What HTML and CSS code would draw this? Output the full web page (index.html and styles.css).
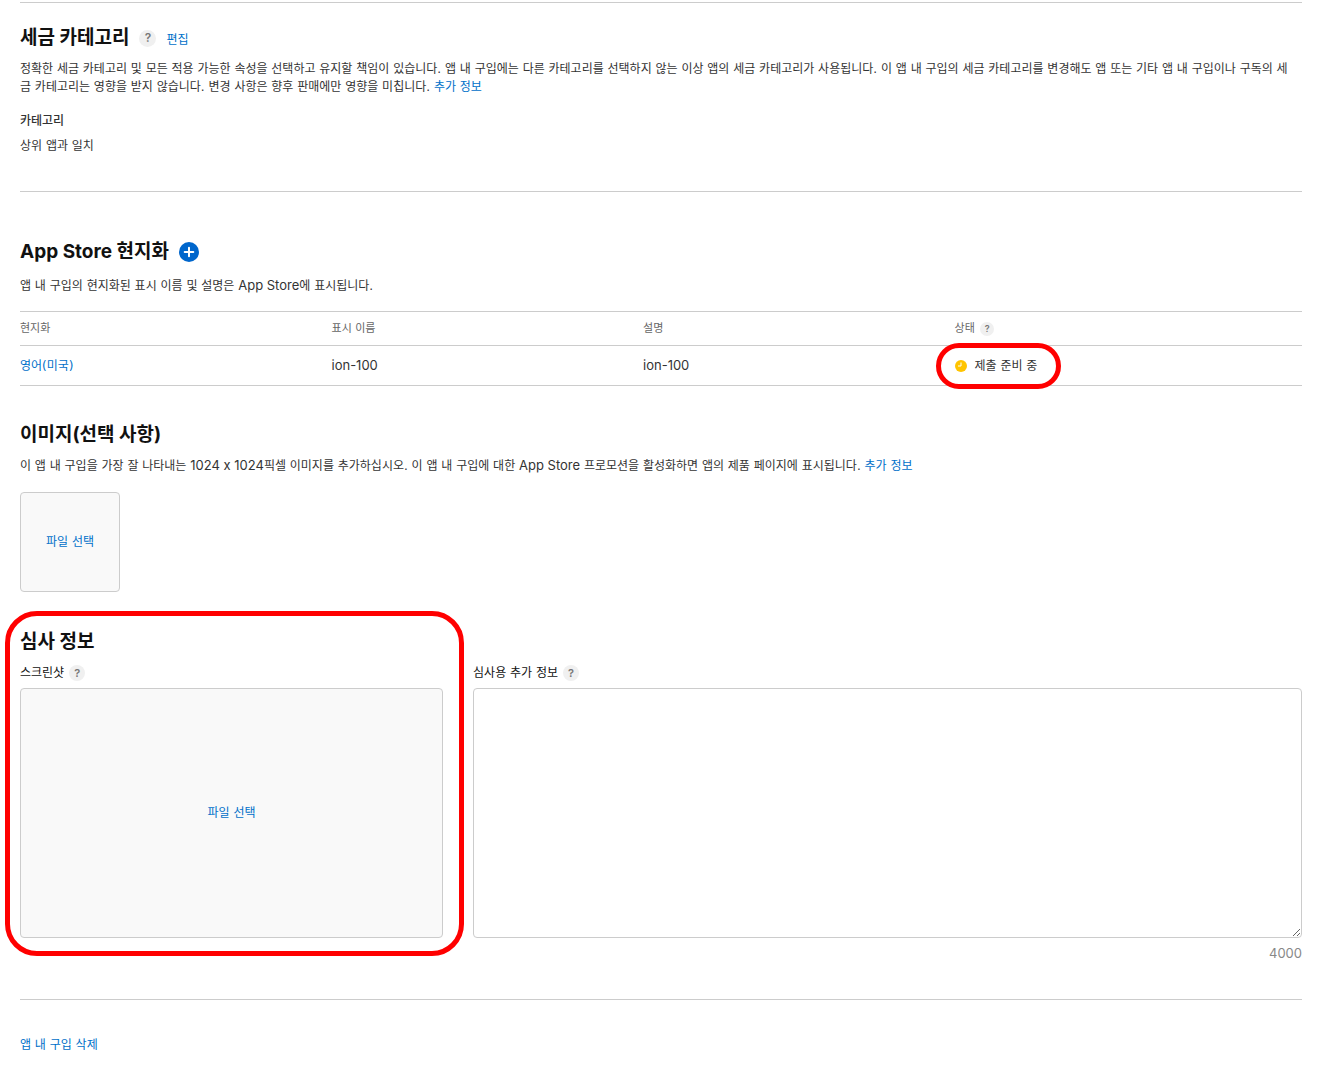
FILE: index.html
```
<!DOCTYPE html>
<html lang="ko">
<head>
    <meta charset="UTF-8">
    <meta name="viewport" content="width=device-width, initial-scale=1.0">
    <title>앱 내 구입</title>
    <link rel="stylesheet" href="styles.css">
</head>
<body>
    <main class="page">
        <section class="tax">
            <div class="heading heading-text">
                <h2>세금 카테고리</h2>
                <button type="button" class="help help-large">?</button>
                <a href="#" class="edit">편집</a>
            </div>
            <p>정확한 세금 카테고리 및 모든 적용 가능한 속성을 선택하고 유지할 책임이 있습니다. 앱 내 구입에는 다른 카테고리를 선택하지 않는 이상 앱의 세금 카테고리가 사용됩니다. 이 앱 내 구입의 세금 카테고리를 변경해도 앱 또는 기타 앱 내 구입이나 구독의 세금 카테고리는 영향을 받지 않습니다. 변경 사항은 향후 판매에만 영향을 미칩니다. <a href="#">추가 정보</a></p>
            <h3>카테고리</h3>
            <p class="value">상위 앱과 일치</p>
        </section>

        <section class="localization">
            <div class="heading">
                <h2>App Store 현지화</h2>
                <button type="button" class="add" aria-label="추가">
                    <svg width="20" height="20" viewBox="0 0 20 20">
                        <circle cx="10" cy="10" r="10" fill="#0066cc"/>
                        <path d="M10 5.7v8.6M5.7 10h8.6" stroke="#fff" stroke-width="2" stroke-linecap="round"/>
                    </svg>
                </button>
            </div>
            <p>앱 내 구입의 현지화된 표시 이름 및 설명은 <span class="latin">App Store</span>에 표시됩니다.</p>
            <table>
                <thead>
                    <tr>
                        <th>현지화</th>
                        <th>표시 이름</th>
                        <th>설명</th>
                        <th class="status-col">상태 <button type="button" class="help help-small">?</button></th>
                    </tr>
                </thead>
                <tbody>
                    <tr>
                        <td><a href="#">영어(미국)</a></td>
                        <td><span class="latin">ion-100</span></td>
                        <td><span class="latin">ion-100</span></td>
                        <td>
                            <span class="status">
                                <svg width="12" height="12" viewBox="0 0 12 12">
                                    <circle cx="6" cy="6" r="6" fill="#ffc400"/>
                                    <path d="M6 2.5V6H3" fill="none" stroke="#fff" stroke-width="1"/>
                                </svg>
                                제출 준비 중
                            </span>
                        </td>
                    </tr>
                </tbody>
            </table>
        </section>

        <section class="image">
            <h2>이미지(선택 사항)</h2>
            <p>이 앱 내 구입을 가장 잘 나타내는 <span class="latin">1024 x 1024</span>픽셀 이미지를 추가하십시오. 이 앱 내 구입에 대한 <span class="latin">App Store</span> 프로모션을 활성화하면 앱의 제품 페이지에 표시됩니다. <a href="#">추가 정보</a></p>
            <button type="button" class="picker picker-image">파일 선택</button>
        </section>

        <section class="review">
            <div class="screenshot">
                <h2>심사 정보</h2>
                <div class="label">
                    <label for="screenshot">스크린샷</label>
                    <button type="button" class="help">?</button>
                </div>
                <button type="button" id="screenshot" class="picker picker-screenshot">파일 선택</button>
            </div>
            <div class="notes">
                <div class="label">
                    <label for="notes">심사용 추가 정보</label>
                    <button type="button" class="help">?</button>
                </div>
                <textarea id="notes" maxlength="4000"></textarea>
                <div class="count">4000</div>
            </div>
        </section>

        <footer>
            <a href="#">앱 내 구입 삭제</a>
        </footer>
    </main>
</body>
</html>
```
FILE: styles.css
```
* {
    box-sizing: border-box;
}
body {
    margin: 0;
    background-color: #fff;
    color: #333;
    font-family: "DejaVu Sans", "Noto Sans CJK KR", sans-serif;
    font-size: 12px;
    line-height: 18px;
}
h2, h3, p {
    margin: 0;
}
h2 {
    color: #111;
    font-family: Inter, "Noto Sans CJK KR", sans-serif;
    font-size: 19px;
    font-weight: 700;
    line-height: 28px;
}
h3 {
    font-size: 12px;
    font-weight: 500;
}
a {
    color: #0070c9;
    text-decoration: none;
}
a:hover {
    text-decoration: underline;
}
button {
    padding: 0;
    border: none;
    background: none;
    font-family: inherit;
    cursor: pointer;
}
.page {
    padding: 2px 37px 0 20px;
}
.heading {
    display: flex;
    align-items: center;
    gap: 10px;
}
.heading-text {
    align-items: baseline;
}
.latin, .help, .count {
    font-family: Inter, sans-serif;
}
.latin {
    font-size: 13px;
    line-height: 1;
}
.help {
    width: 16px;
    height: 16px;
    border-radius: 50%;
    background-color: #f0f0f0;
    color: #777;
    font-size: 11px;
    font-weight: 600;
    line-height: 16px;
    text-align: center;
}
.help-large {
    align-self: center;
    width: 17px;
    height: 17px;
    font-size: 12px;
}
.help-small {
    width: 14px;
    height: 14px;
    margin-left: 2px;
    font-size: 9px;
    line-height: 14px;
}

.tax {
    padding: 21px 0 36px;
    border-top: 1px solid #ccc;
    border-bottom: 1px solid #ccc;
}
.tax p {
    margin-top: 8px;
    padding-right: 8px;
}
.tax h3 {
    margin-top: 16px;
}
.tax .value {
    margin-top: 7px;
}

.localization {
    padding-top: 46px;
}
.add, .add svg {
    display: block;
}
.localization p {
    margin-top: 11px;
}
table {
    width: 100%;
    margin-top: 16px;
    border-collapse: collapse;
    table-layout: fixed;
}
th, td {
    padding: 0;
    border-top: 1px solid #ccc;
    border-bottom: 1px solid #ccc;
    text-align: left;
}
th {
    width: 24.3%;
    height: 34px;
    color: #666;
    font-size: 11px;
    font-weight: 400;
}
.status-col {
    width: auto;
}
td {
    height: 40px;
}
.status {
    display: inline-flex;
    align-items: center;
    gap: 8px;
    position: relative;
    vertical-align: middle;
}
/* red highlight rings */
.status::after, .screenshot::after {
    content: '';
    position: absolute;
    border: 5px solid #f00;
    pointer-events: none;
}
.status::after {
    inset: -14px -24px -14px -19px;
    border-radius: 23px;
}

.image {
    padding-top: 35px;
}
.image p {
    margin-top: 8px;
}

.picker {
    display: block;
    border: 1px solid #ccc;
    border-radius: 4px;
    background-color: #f9f9f9;
    color: #0070c9;
    font-size: 12px;
    line-height: 18px;
}
.picker-image {
    width: 100px;
    height: 100px;
    margin-top: 17px;
}
.picker-screenshot {
    width: 100%;
    height: 250px;
}

.review {
    display: flex;
    gap: 30px;
    padding: 36px 0 37px;
    border-bottom: 1px solid #ccc;
}
.screenshot {
    flex: 0 0 33%;
    position: relative;
}
.screenshot::after {
    inset: -17px -21px 6px -15px;
    border-radius: 32px;
}
.label {
    display: flex;
    align-items: center;
    gap: 5px;
    margin: 8px 0 6px;
    color: #111;
}
.notes {
    flex: 1;
    padding-top: 28px;
}
textarea {
    display: block;
    width: 100%;
    height: 250px;
    border: 1px solid #ccc;
    border-radius: 4px;
    font: inherit;
    resize: vertical;
}
.count {
    margin-top: 6px;
    color: #888;
    font-size: 13px;
    text-align: right;
}

footer {
    padding: 36px 0;
}
```
